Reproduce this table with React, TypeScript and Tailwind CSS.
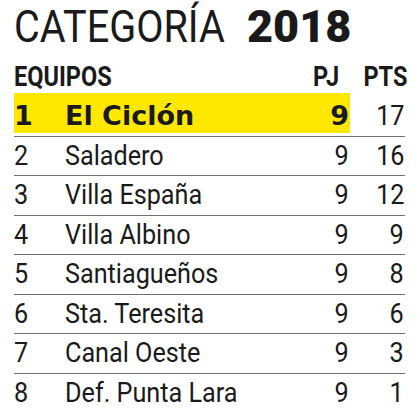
import React from "react";

const rows: [number, string, number, number][] = [
  [2, "Saladero", 9, 16],
  [3, "Villa España", 9, 12],
  [4, "Villa Albino", 9, 9],
  [5, "Santiagueños", 9, 8],
  [6, "Sta. Teresita", 9, 6],
  [7, "Canal Oeste", 9, 3],
  [8, "Def. Punta Lara", 9, 1],
];

export default function App() {
  return (
    <div className="w-[420px] h-[410px] overflow-hidden bg-white text-[#1a1a1a] font-['Roboto',sans-serif]">
      <div className="pl-[14px] pt-[5px] h-[49px] flex items-start leading-[44px] whitespace-nowrap">
        <span className="inline-block text-[44px] origin-left scale-x-[0.9] w-[213px]">CATEGORÍA</span>
        <span className="inline-block text-[45px] font-black ml-[20px]">2018</span>
      </div>
      <div className="mt-[14px] ml-[14px] w-[391px] flex h-[28px] leading-[28px] text-[28px] font-bold whitespace-nowrap">
        <span className="flex-1"><span className="inline-block origin-left scale-x-[0.84]">EQUIPOS</span></span>
        <span className="w-[40px] text-right mr-[13px]"><span className="inline-block origin-right scale-x-[0.84]">PJ</span></span>
        <span className="w-[55px] text-right -mr-[2px]"><span className="inline-block origin-right scale-x-[0.84]">PTS</span></span>
      </div>
      <div className="ml-[14px] w-[391px] mt-[2px]">
        <div className="flex h-[43.5px] border-b-[1.5px] border-[#6f6f6f] whitespace-nowrap">
          <div className="w-[336px] h-[40px] bg-[#ffe800] flex pt-[4px] leading-[38px] text-[27px] font-bold font-['DejaVu_Sans',sans-serif]">
            <span className="w-[51px]">1</span>
            <span className="flex-1">El Ciclón</span>
            <span className="pr-[1px]">9</span>
          </div>
          <div className="flex-1 text-right pt-[4px] leading-[38px] text-[28px] pr-[1px]">
            <span className="inline-block origin-right scale-x-[0.9]">17</span>
          </div>
        </div>
        {rows.map(([n, name, pj, pts], i) => (
          <div
            key={n}
            className={`flex h-[39.5px] leading-[38.5px] text-[28px] whitespace-nowrap ${i < rows.length - 1 ? "border-b-[1.5px] border-[#6f6f6f]" : ""}`}
          >
            <span className="w-[51px]"><span className="inline-block origin-left scale-x-[0.9]">{n}</span></span>
            <span className="flex-1"><span className="inline-block origin-left scale-x-[0.9]">{name}</span></span>
            <span className="w-[40px] text-right pr-[1px]"><span className="inline-block origin-right scale-x-[0.9]">{pj}</span></span>
            <span className="w-[55px] text-right pr-[1px]"><span className="inline-block origin-right scale-x-[0.9]">{pts}</span></span>
          </div>
        ))}
      </div>
    </div>
  );
}
